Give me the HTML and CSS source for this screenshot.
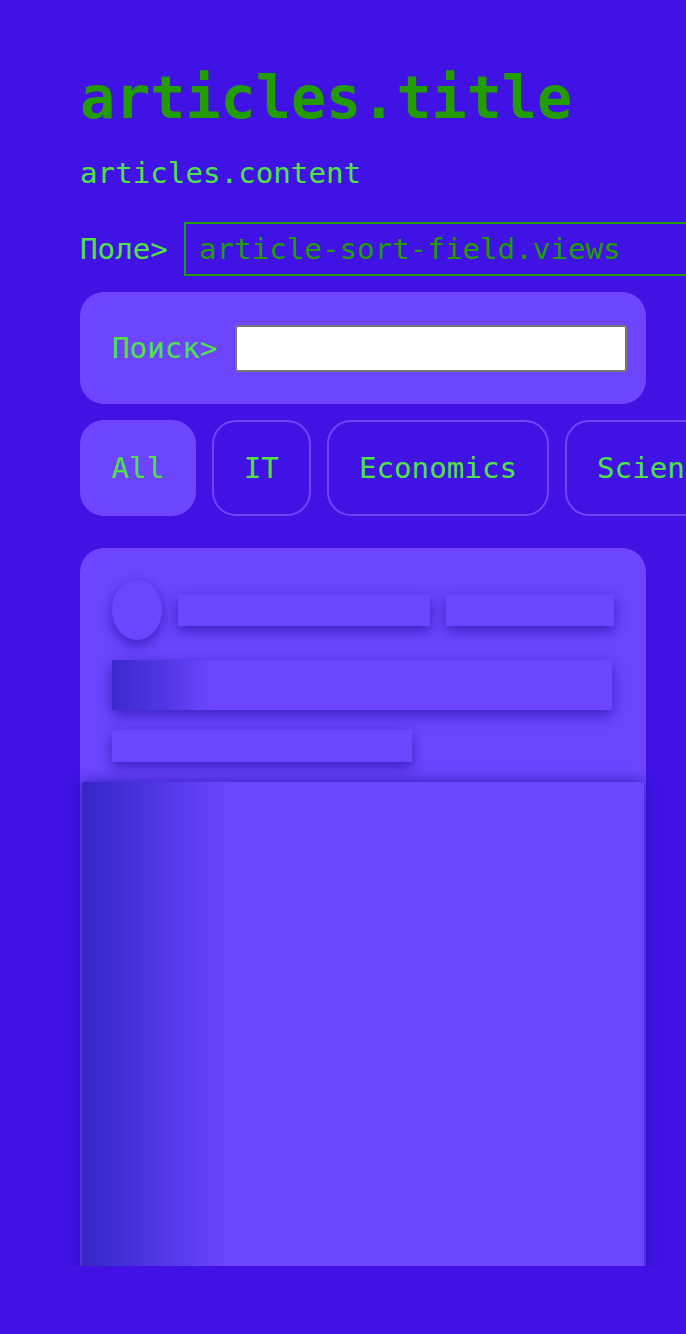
FILE: index.html
```html
<!DOCTYPE html>
<html lang="ru">
<head>
<meta charset="utf-8">
<title>articles.title</title>
<link rel="stylesheet" href="styles.css">
</head>
<body>
<div class="page">
  <main class="content">
    <h1 class="title">articles.title</h1>
    <p class="lead">articles.content</p>
    <div class="sort-row">
      <span class="label">Поле&gt;</span>
      <div class="select">article-sort-field.views</div>
    </div>
    <div class="search-card">
      <span class="label">Поиск&gt;</span>
      <input class="search-input" type="text">
    </div>
    <div class="tabs">
      <div class="tab tab-active">All</div>
      <div class="tab">IT</div>
      <div class="tab">Economics</div>
      <div class="tab">Science</div>
    </div>
    <div class="card">
      <div class="sk-head">
        <div class="sk sk-avatar"></div>
        <div class="sk sk-name"></div>
        <div class="sk sk-date"></div>
      </div>
      <div class="sk sk-title shimmer"></div>
      <div class="sk sk-sub"></div>
      <div class="sk sk-image shimmer-wide"></div>
    </div>
  </main>
</div>
</body>
</html>
```

FILE: styles.css
```css
html, body {
  margin: 0;
  padding: 0;
  background: #4013e4;
}

body {
  font-family: "DejaVu Sans Mono", "Liberation Mono", monospace;
  color: #4ee443;
}

.page {
  height: 1266px;
  overflow: hidden;
}

.content {
  padding: 64px 40px 0 80px;
  display: flex;
  flex-direction: column;
}

.title {
  margin: 0;
  font-size: 58.4px;
  font-weight: bold;
  color: #229c00;
  line-height: 68px;
}

.lead {
  margin: 24px 0 0;
  font-size: 29.2px;
  line-height: 34px;
}

.label {
  font-size: 29.2px;
  line-height: 34px;
  white-space: nowrap;
  color: #4ee443;
}

.sort-row {
  margin-top: 32px;
  display: flex;
  align-items: center;
  gap: 16px;
}

.select {
  flex: none;
  width: 560px;
  height: 54px;
  box-sizing: border-box;
  border: 2px solid #229c00;
  padding: 0 13px;
  display: flex;
  align-items: center;
  font-size: 29.2px;
  color: #229c00;
  white-space: nowrap;
}

.search-card {
  margin-top: 16px;
  height: 112px;
  box-sizing: border-box;
  background: #6d45ff;
  border-radius: 24px;
  padding: 0 19px 0 32px;
  display: flex;
  align-items: center;
  gap: 18px;
}

.search-input {
  flex: 1;
  height: 47px;
  box-sizing: border-box;
  margin: 0;
  border: 2px solid #767676;
  border-radius: 3px;
  background: #ffffff;
  padding: 0 8px;
  font-size: 20px;
}

.tabs {
  margin-top: 16px;
  display: flex;
  gap: 16px;
  width: 800px;
}

.tab {
  flex: none;
  height: 96px;
  box-sizing: border-box;
  border: 2px solid #6d45ff;
  border-radius: 24px;
  padding: 0 30px;
  display: flex;
  align-items: center;
  font-size: 29.2px;
  color: #4ee443;
  white-space: nowrap;
}

.tab-active {
  background: #6d45ff;
  padding: 0 29.5px;
}

.card {
  margin-top: 32px;
  background: #6d45ff;
  border-radius: 24px 24px 0 0;
  padding: 32px 32px 0;
  height: 800px;
  display: flex;
  flex-direction: column;
  align-items: flex-start;
}

.sk {
  flex: none;
  background: #6d45ff;
  box-shadow: 0 5px 14px rgba(40, 20, 170, 0.75);
}

.sk-head {
  flex: none;
  display: flex;
  align-items: center;
  gap: 16px;
  height: 60px;
}

.sk-avatar {
  width: 50px;
  height: 60px;
  border-radius: 50%;
}

.sk-name {
  width: 252px;
  height: 32px;
}

.sk-date {
  width: 168px;
  height: 32px;
}

.sk-title {
  margin-top: 20px;
  width: 500px;
  height: 50px;
}

.shimmer {
  background: linear-gradient(90deg, #3c29cc 0px, #4f36e2 50px, #6d45ff 100px, #6d45ff 100%);
}

.sk-sub {
  margin-top: 20px;
  width: 300px;
  height: 32px;
}

.sk-image {
  margin: 20px -30px 0;
  width: 562px;
  height: 700px;
  box-shadow: 0 0 14px rgba(30, 15, 160, 0.8);
}

.shimmer-wide {
  background: linear-gradient(90deg, #3726c4 0px, #4030d4 40px, #5a3cee 100px, #6d45ff 150px, #6d45ff 100%);
}
```
